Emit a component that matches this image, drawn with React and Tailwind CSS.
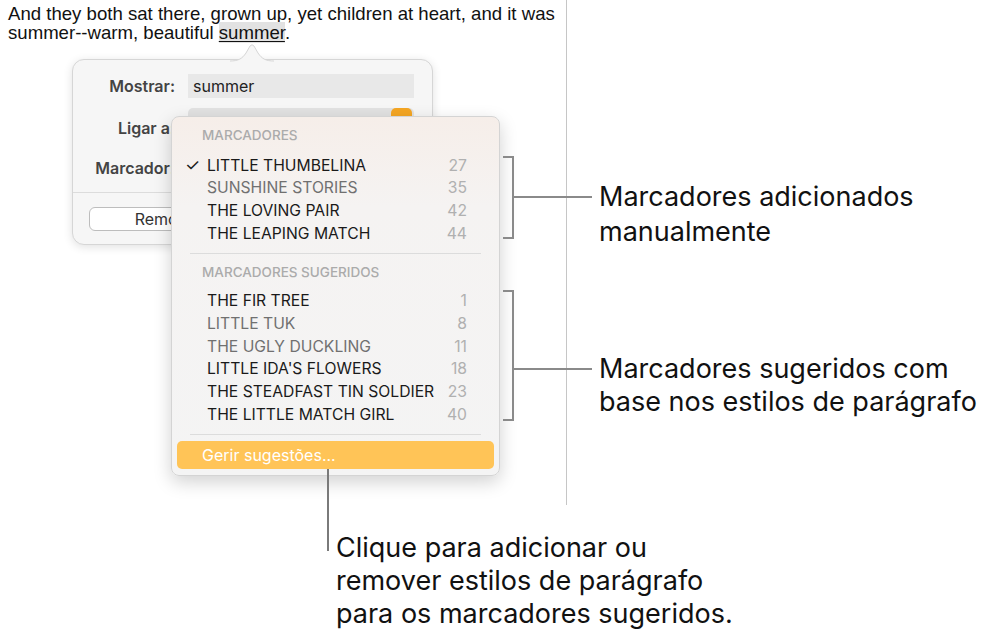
import React from 'react';

const SAVED = [
  { name: 'LITTLE THUMBELINA', page: 27, on: true, checked: true },
  { name: 'SUNSHINE STORIES', page: 35, on: false },
  { name: 'THE LOVING PAIR', page: 42, on: true },
  { name: 'THE LEAPING MATCH', page: 44, on: true },
];

const SUGGESTED = [
  { name: 'THE FIR TREE', page: 1, on: true },
  { name: 'LITTLE TUK', page: 8, on: false },
  { name: 'THE UGLY DUCKLING', page: 11, on: false },
  { name: "LITTLE IDA'S FLOWERS", page: 18, on: true },
  { name: 'THE STEADFAST TIN SOLDIER', page: 23, on: true },
  { name: 'THE LITTLE MATCH GIRL', page: 40, on: true },
];

const ui = { fontFamily: 'Inter, "Noto Sans", sans-serif' };
const doc = { fontFamily: '"Liberation Sans", Arial, sans-serif' };

function MenuRow({ item }) {
  return (
    <div className="flex items-center h-[22.7px] pl-[13px] pr-[32px] text-[15.7px]">
      <span className="w-[22px] text-[17px] text-[#1a1a1a]">{item.checked ? '✓' : ''}</span>
      <span className={`flex-1 ${item.on ? 'text-[#1a1a1a]' : 'text-[#707070]'}`}>{item.name}</span>
      <span className="text-[#b0b0b0]">{item.page}</span>
    </div>
  );
}

function SectionHead({ children }) {
  return (
    <div className="pt-[9px] pl-[30px] h-[28px] text-[13.5px] font-medium text-[#ababab] leading-[18px]">
      {children}
    </div>
  );
}

function Bracket({ top, height, mid }) {
  return (
    <>
      <div
        className="absolute left-[503px] w-[11px] border-t-2 border-r-2 border-b-2 border-[#8a8a8a]"
        style={{ top, height }}
      />
      <div className="absolute left-[514px] w-[78px] h-[2px] bg-[#8a8a8a]" style={{ top: mid }} />
    </>
  );
}

export default function App() {
  return (
    <div className="relative w-[991px] h-[641px] bg-white overflow-hidden text-black">
      {/* document column */}
      <div className="w-[567px] h-[505px] border-r border-[#c6c6c6] pl-[8px] pt-[4px]" style={doc}>
        <p className="text-[18.6px] leading-[19px] text-[#111] whitespace-nowrap">
          And they both sat there, grown up, yet children at heart, and it was
          <br />
          summer--warm, beautiful <span className="bg-[#e2e2e2] underline underline-offset-2">summer</span>.
        </p>
      </div>

      {/* link popover */}
      <div
        className="absolute left-[72px] top-[59px] w-[361px] h-[186px] rounded-[12px] bg-[#f6f6f6] border border-[#d6d6d6] shadow-[0_2px_10px_rgba(0,0,0,0.12)] flex flex-col"
        style={ui}
      >
        <svg className="absolute left-[157px] top-[-16px]" width="44" height="18" viewBox="0 0 44 18">
          <path d="M0 17 C8 17 12 15 16 9 L20 2 Q22 -0.5 24 2 L28 9 C32 15 36 17 44 17 L44 18 L0 18 Z" fill="#f6f6f6" />
          <path d="M0 17 C8 17 12 15 16 9 L20 2 Q22 -0.5 24 2 L28 9 C32 15 36 17 44 17" fill="none" stroke="#d6d6d6" strokeWidth="1" />
        </svg>
        <div className="flex flex-col gap-[10px] pt-[14px]">
          <div className="flex items-center gap-[13px] h-[24px]">
            <span className="w-[102px] text-right text-[16px] font-semibold text-[#444]">Mostrar:</span>
            <div className="w-[226px] h-[24px] bg-[#e8e8e8] flex items-center pl-[5px] text-[16px] text-[#222]">
              summer
            </div>
          </div>
          <div className="flex items-start gap-[13px] h-[38px]">
            <span className="w-[102px] text-right text-[16px] font-semibold text-[#444] pt-[8px]">Ligar a:</span>
            <div className="relative w-[226px] h-[24px] bg-[#e2e2e2] rounded-[5px]">
              <div className="absolute right-[2px] top-0 w-[21px] h-[20px] bg-[#f5a623] rounded-[5px]" />
            </div>
          </div>
          <div className="flex items-center gap-[13px] h-[24px]">
            <span className="w-[102px] text-right text-[16px] font-semibold text-[#444]">Marcador:</span>
          </div>
        </div>
        <div className="mt-[12px] border-t border-[#dcdcdc]" />
        <div className="mt-[14px] ml-[16px] w-[158px] h-[24px] rounded-[6px] border border-[#bdbdbd] bg-white flex items-center justify-center text-[16px] text-[#333]">
          Remover
        </div>
      </div>

      {/* bookmark menu */}
      <div
        className="absolute left-[171px] top-[116px] w-[329px] h-[360px] rounded-[8px] border border-[#d4d4d4] bg-[linear-gradient(180deg,#f6eee9_0%,#f5f3f2_25%,#f4f4f4_100%)] shadow-[0_6px_18px_rgba(0,0,0,0.18)]"
        style={ui}
      >
        <SectionHead>MARCADORES</SectionHead>
        <div className="mt-[9px]">
          {SAVED.map((it) => (
            <MenuRow key={it.name} item={it} />
          ))}
        </div>
        <div className="mx-[18px] mt-[8px] border-t border-[#dcdcdc]" />
        <SectionHead>MARCADORES SUGERIDOS</SectionHead>
        <div className="mt-[8px]">
          {SUGGESTED.map((it) => (
            <MenuRow key={it.name} item={it} />
          ))}
        </div>
        <div className="mx-[18px] mt-[8px] border-t border-[#dcdcdc]" />
        <div className="mx-[5px] mt-[6px] h-[28px] rounded-[5px] bg-[#ffc457] flex items-center pl-[25px] text-[16px] text-white">
          Gerir sugestões...
        </div>
      </div>

      {/* callouts */}
      <Bracket top={156} height={83} mid={196} />
      <Bracket top={290} height={131} mid={368} />
      <div className="absolute left-[327px] top-[469px] w-[2px] h-[82px] bg-[#7a7a7a]" />

      <div className="absolute left-[599px] top-[179px] text-[27px] leading-[35px] text-[#111]" style={ui}>
        Marcadores adicionados
        <br />
        manualmente
      </div>
      <div className="absolute left-[599px] top-[352px] text-[27px] leading-[33px] text-[#111]" style={ui}>
        Marcadores sugeridos com
        <br />
        base nos estilos de parágrafo
      </div>
      <div className="absolute left-[336px] top-[531px] text-[27px] leading-[33px] text-[#111]" style={ui}>
        Clique para adicionar ou
        <br />
        remover estilos de parágrafo
        <br />
        para os marcadores sugeridos.
      </div>
    </div>
  );
}
